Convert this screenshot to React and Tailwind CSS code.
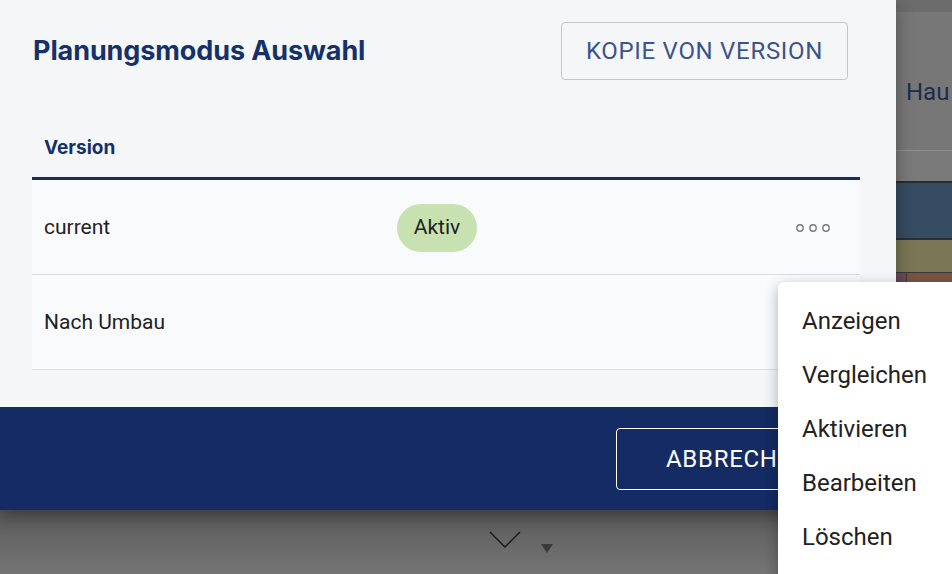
import React from 'react';

const versions = [
  { name: 'current', active: true },
  { name: 'Nach Umbau', active: false },
];

const menuItems = ['Anzeigen', 'Vergleichen', 'Aktivieren', 'Bearbeiten', 'Löschen'];

function Dots() {
  return (
    <svg width="36" height="10" viewBox="0 0 36 10" className="text-[#7a7a7a]">
      <circle cx="5" cy="5" r="3.2" fill="none" stroke="currentColor" strokeWidth="1.4" />
      <circle cx="18" cy="5" r="3.2" fill="none" stroke="currentColor" strokeWidth="1.4" />
      <circle cx="31" cy="5" r="3.2" fill="none" stroke="currentColor" strokeWidth="1.4" />
    </svg>
  );
}

export default function App() {
  return (
    <div className="relative w-[952px] h-[574px] overflow-hidden bg-[#6f6f6f] font-['Roboto',sans-serif]">
      <div className="flex h-[510px]">
        {/* Dialog */}
        <div className="w-[896px] flex flex-col bg-[#f5f6f8] shadow-[0_6px_16px_rgba(0,0,0,0.35)] z-10">
          <div className="flex items-center justify-between pl-[33px] pr-[48px] pt-[22px]">
            <h1 className="font-['Inter',sans-serif] font-bold text-[27px] text-[#16306a] tracking-[-0.1px]">
              Planungsmodus Auswahl
            </h1>
            <button className="w-[287px] h-[58px] border border-[#c3c6cc] rounded-[4px] text-[24px] tracking-[0.7px] text-[#3d5488] uppercase">
              Kopie von Version
            </button>
          </div>

          <div className="ml-[32px] mr-[36px] mt-[34px]">
            <div className="h-[66px] flex items-center pl-[12px] pt-[5px] border-b-[3px] border-[#152c64]">
              <span className="font-['Inter',sans-serif] font-bold text-[19px] text-[#16306a]">Version</span>
            </div>
            {versions.map((v) => (
              <div key={v.name} className="h-[95px] flex items-center bg-[#f9fafc] border-b border-[#dcdee2] pl-[12px] pr-[29px] pt-[1px]">
                <span className="w-[353px] text-[21px] text-[#222]">{v.name}</span>
                <div className="flex-1">
                  {v.active && (
                    <span className="inline-flex items-center justify-center w-[80px] h-[48px] rounded-full bg-[#c7e2b0] text-[21px] text-[#222]">
                      Aktiv
                    </span>
                  )}
                </div>
                {v.active && <Dots />}
              </div>
            ))}
          </div>

          <div className="mt-auto h-[103px] bg-[#142b63] flex items-start justify-end pt-[21px] pr-[30px]">
            <button className="h-[62px] w-[250px] border border-white rounded-[4px] text-white text-[24px] tracking-[0.7px] uppercase text-left pl-[49px]">
              Abbrechen
            </button>
          </div>
        </div>

        {/* Page behind the overlay */}
        <div className="flex-1 flex flex-col bg-[#6f6f6f]">
          <div className="h-[12px] bg-[#6c6c6c]" />
          <div className="h-[139px] bg-[#777777] border-b border-[#8f8f8f] pl-[10px] pt-[62px]">
            <span className="text-[24px] text-[#1c2d4c]">Hau</span>
          </div>
          <div className="h-[32px] bg-[#7a7a7a] border-b-[2px] border-[#2c2c2c]" />
          <div className="h-[57px] bg-[#364c62] border-b-[2px] border-[#2a2f38]" />
          <div className="h-[32px] bg-[#7a7656]" />
          <div className="flex-1 flex border-t border-[#3b3b3b]">
            <div className="w-[10px] bg-[#6e4b5d]" />
            <div className="flex-1 bg-[#7d5443] border-l border-[#3b3b3b]" />
          </div>
        </div>
      </div>

      {/* Bottom strip behind overlay */}
      <div className="h-[64px] flex items-start bg-gradient-to-b from-[#5a5a5a] to-[#757575]">
        <div className="ml-[488px] mt-[20px]">
          <svg width="34" height="20" viewBox="0 0 34 20">
            <path d="M2 2 L17 17 L32 2" fill="none" stroke="#1a1a1a" strokeWidth="1.4" />
          </svg>
        </div>
        <div className="ml-[18px] mt-[33px]">
          <svg width="14" height="11" viewBox="0 0 14 11">
            <path d="M1 1 H13 L7 10 Z" fill="#3a3a3a" />
          </svg>
        </div>
      </div>

      {/* Context menu */}
      <div className="absolute left-[778px] top-[282px] w-[200px] h-[320px] bg-white rounded-[6px] shadow-[0_4px_14px_rgba(0,0,0,0.3)] z-20 pt-[12px]">
        {menuItems.map((item) => (
          <div key={item} className="h-[54px] flex items-center pl-[24px] text-[24px] text-[#222]">
            {item}
          </div>
        ))}
      </div>
    </div>
  );
}
